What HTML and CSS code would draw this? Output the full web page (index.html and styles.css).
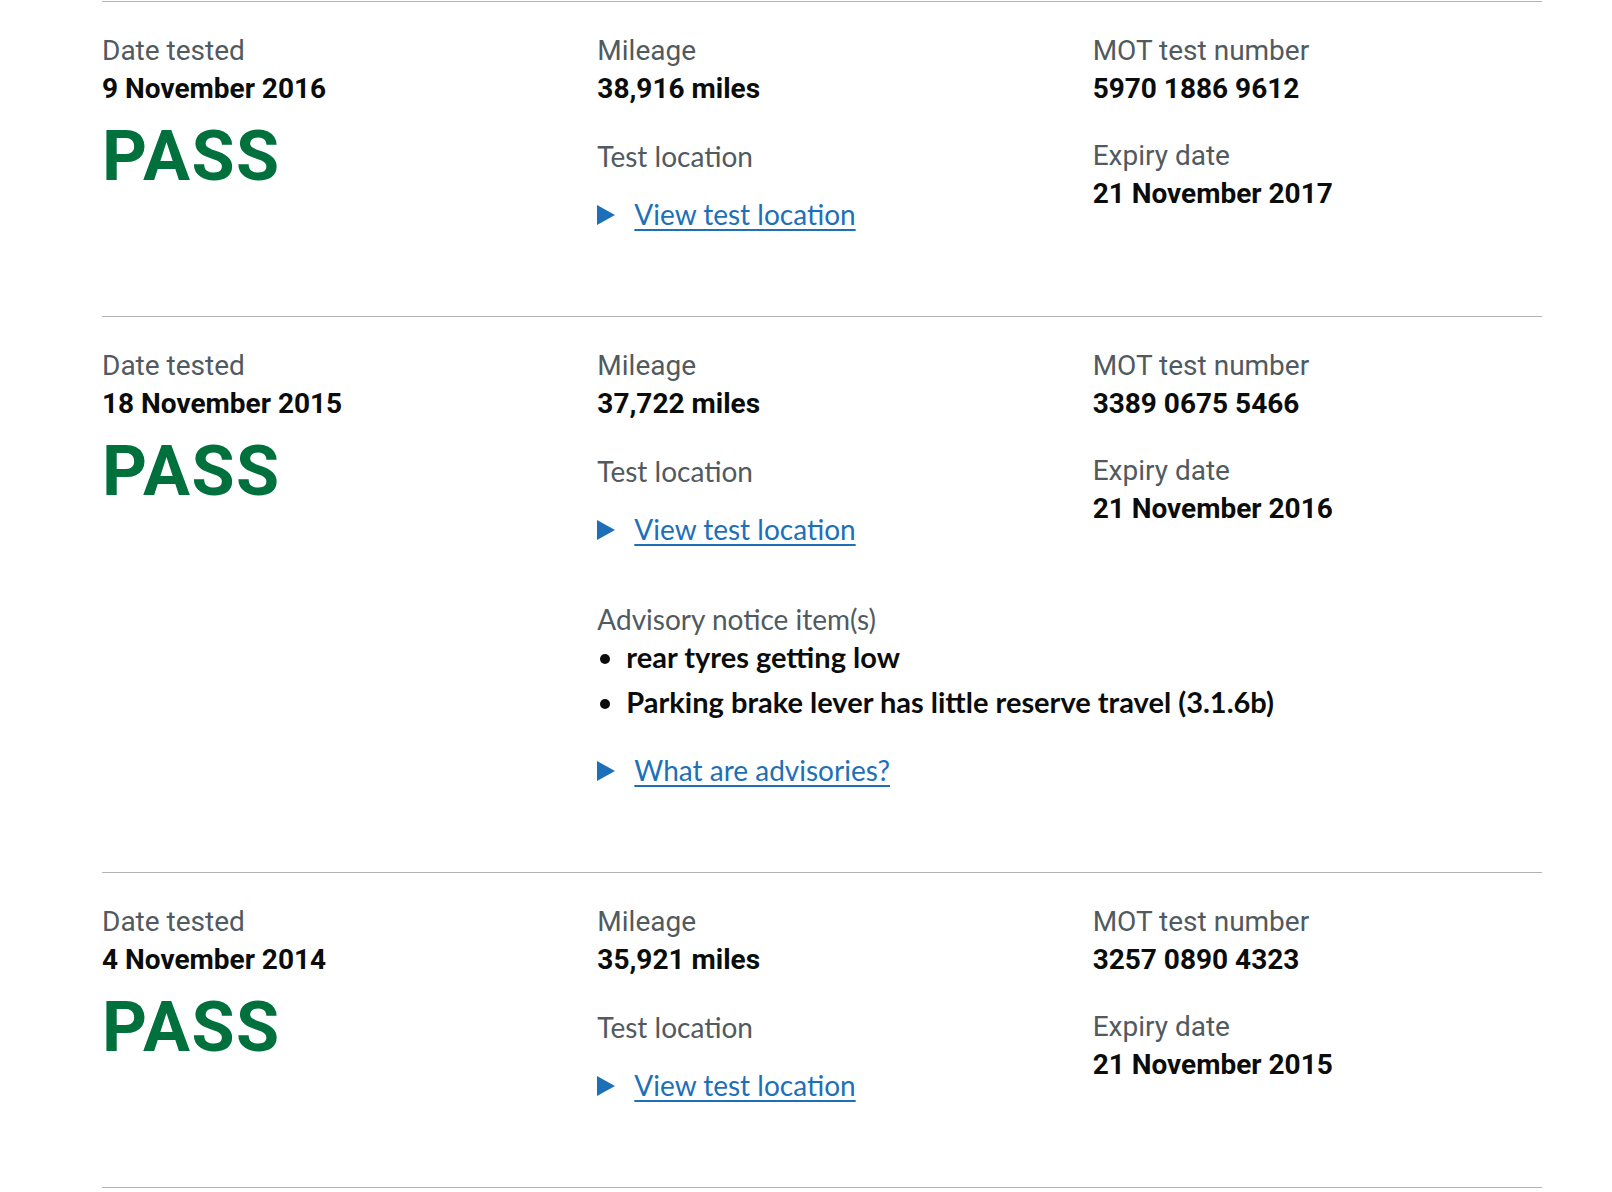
FILE: index.html
```html
<!DOCTYPE html>
<html lang="en">
<head>
<meta charset="utf-8">
<title>MOT history</title>
<link rel="stylesheet" href="styles.css">
</head>
<body>
<main class="history">
  <section class="test">
    <div class="col">
      <p class="label">Date tested</p>
      <p class="value">9 November 2016</p>
      <p class="result">PASS</p>
    </div>
    <div class="col">
      <p class="label">Mileage</p>
      <p class="value">38,916 miles</p>
      <p class="label alt gap">Test location</p>
      <a class="toggle" href="#"><svg class="arrow" width="18" height="20" viewBox="0 0 18 20" aria-hidden="true"><polygon points="0,0 18,10 0,20" fill="#1d70b8"/></svg><span class="toggle-text">View test location</span></a>
    </div>
    <div class="col">
      <p class="label">MOT test number</p>
      <p class="value">5970 1886 9612</p>
      <p class="label gap">Expiry date</p>
      <p class="value">21 November 2017</p>
    </div>
  </section>

  <section class="test">
    <div class="col">
      <p class="label">Date tested</p>
      <p class="value">18 November 2015</p>
      <p class="result">PASS</p>
    </div>
    <div class="col">
      <p class="label">Mileage</p>
      <p class="value">37,722 miles</p>
      <p class="label alt gap">Test location</p>
      <a class="toggle" href="#"><svg class="arrow" width="18" height="20" viewBox="0 0 18 20" aria-hidden="true"><polygon points="0,0 18,10 0,20" fill="#1d70b8"/></svg><span class="toggle-text">View test location</span></a>
      <p class="label alt advisory-title">Advisory notice item(s)</p>
      <ul class="advisories">
        <li>rear tyres getting low</li>
        <li>Parking brake lever has little reserve travel (3.1.6b)</li>
      </ul>
      <a class="toggle after-list" href="#"><svg class="arrow" width="18" height="20" viewBox="0 0 18 20" aria-hidden="true"><polygon points="0,0 18,10 0,20" fill="#1d70b8"/></svg><span class="toggle-text">What are advisories?</span></a>
    </div>
    <div class="col">
      <p class="label">MOT test number</p>
      <p class="value">3389 0675 5466</p>
      <p class="label gap">Expiry date</p>
      <p class="value">21 November 2016</p>
    </div>
  </section>

  <section class="test">
    <div class="col">
      <p class="label">Date tested</p>
      <p class="value">4 November 2014</p>
      <p class="result">PASS</p>
    </div>
    <div class="col">
      <p class="label">Mileage</p>
      <p class="value">35,921 miles</p>
      <p class="label alt gap">Test location</p>
      <a class="toggle" href="#"><svg class="arrow" width="18" height="20" viewBox="0 0 18 20" aria-hidden="true"><polygon points="0,0 18,10 0,20" fill="#1d70b8"/></svg><span class="toggle-text">View test location</span></a>
    </div>
    <div class="col">
      <p class="label">MOT test number</p>
      <p class="value">3257 0890 4323</p>
      <p class="label gap">Expiry date</p>
      <p class="value">21 November 2015</p>
    </div>
  </section>
  <div class="end-rule"></div>
</main>
</body>
</html>
```

FILE: styles.css
```css
html, body {
  margin: 0;
  padding: 0;
  background: #ffffff;
}

body {
  font-family: Roboto, "Liberation Sans", sans-serif;
  color: #0b0c0c;
}

.history {
  width: 1440px;
  margin: 0 0 0 102px;
  padding-top: 1px;
}

.test {
  border-top: 1px solid #b1b4b6;
  padding: 30px 0 83px;
  display: grid;
  grid-template-columns: repeat(3, 1fr);
  column-gap: 46px;
}

.end-rule {
  border-top: 1px solid #b1b4b6;
}

.col {
  display: flex;
  flex-direction: column;
  align-items: flex-start;
  min-width: 0;
}

p {
  margin: 0;
}

.label {
  font-size: 28px;
  line-height: 38px;
  color: #505a5f;
}

.label.alt {
  font-family: Lato, "Noto Sans", sans-serif;
  font-size: 28px;
}

.gap {
  margin-top: 29px;
}

.value {
  font-size: 28px;
  line-height: 38px;
  font-weight: 700;
  color: #0b0c0c;
}

.result {
  margin-top: 8px;
  font-size: 70px;
  line-height: 80px;
  font-weight: 700;
  letter-spacing: 1.5px;
  color: #00703c;
}

.toggle {
  margin-top: 20px;
  display: flex;
  align-items: center;
  gap: 19px;
  text-decoration: none;
  font-family: Lato, "Noto Sans", sans-serif;
  font-size: 28px;
  line-height: 38px;
  color: #1d70b8;
}

.arrow {
  display: block;
  flex: none;
  margin-top: 2px;
}

.toggle-text {
  text-decoration: underline;
  text-decoration-thickness: 2px;
  text-underline-offset: 4px;
}

.advisory-title {
  margin-top: 52px;
}

.advisories {
  margin: 0;
  padding: 0 0 0 29px;
  font-family: Lato, "Noto Sans", sans-serif;
  font-size: 29px;
  line-height: 38px;
  font-weight: 700;
  color: #0b0c0c;
  white-space: nowrap;
}

.advisories li + li {
  margin-top: 7px;
}

.toggle.after-list {
  margin-top: 30px;
}
```
